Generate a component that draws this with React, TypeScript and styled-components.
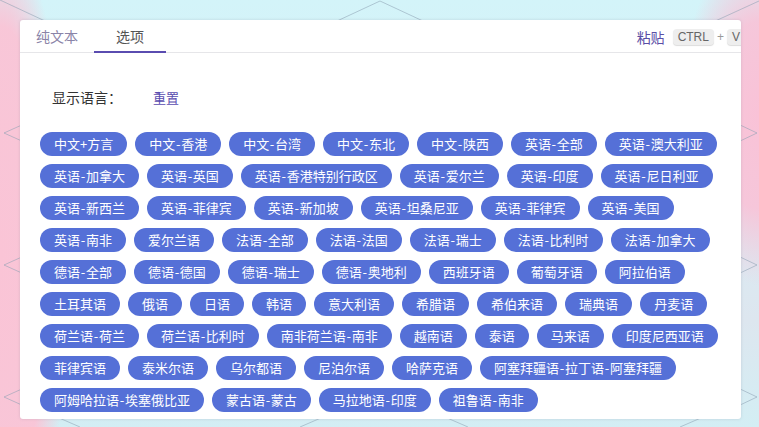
import React from "react";
import styled, { createGlobalStyle } from "styled-components";

const GlobalStyle = createGlobalStyle`
  html, body {
    margin: 0;
    padding: 0;
    width: 759px;
    height: 427px;
    overflow: hidden;
  }
  body {
    font-family: "Noto Sans CJK SC", "Noto Sans", sans-serif;
  }
  * { box-sizing: border-box; }
`;

const Page = styled.div`
  position: relative;
  width: 759px;
  height: 427px;
  padding: 20px 18px 8px 20px;
  background:
    radial-gradient(ellipse 70px 320px at 0% 60%, rgba(250, 196, 214, 1) 0%, rgba(250, 196, 214, 0.95) 72%, rgba(250, 196, 214, 0) 100%),
    radial-gradient(ellipse 80px 170px at 100% 27%, rgba(249, 194, 215, 1) 0%, rgba(249, 194, 215, 0.9) 55%, rgba(249, 194, 215, 0) 100%),
    linear-gradient(to bottom, #d3f4f9 0%, #d8eef5 40%, #dde6ef 75%, #d3eef4 100%);
`;

const Backdrop = styled.svg`
  position: absolute;
  inset: 0;
  width: 759px;
  height: 427px;
  z-index: 0;
`;

const Card = styled.div`
  position: relative;
  z-index: 1;
  width: 721px;
  height: 399px;
  background: #ffffff;
  border-radius: 3px;
  box-shadow: 0 0 3px rgba(120, 120, 140, 0.25);
  overflow: hidden;
  display: flex;
  flex-direction: column;
`;

const Header = styled.div`
  height: 33px;
  flex: none;
  border-bottom: 1px solid #e6e6e9;
  display: flex;
  align-items: stretch;
  justify-content: space-between;
`;

const Tabs = styled.div`
  display: flex;
  align-items: stretch;
`;

const Tab = styled.div<{ $active?: boolean }>`
  position: relative;
  min-width: 72px;
  padding: 0 16px;
  display: flex;
  align-items: center;
  justify-content: center;
  font-size: 14px;
  color: ${(p) => (p.$active ? "#555555" : "#8a84a8")};
  &::after {
    content: "";
    display: ${(p) => (p.$active ? "block" : "none")};
    position: absolute;
    left: 0;
    right: 0;
    bottom: -1px;
    height: 2px;
    background: #5a4cb0;
  }
`;

const PasteGroup = styled.div`
  display: flex;
  align-items: center;
  gap: 8px;
  margin-right: -4px;
  padding-top: 2px;
`;

const PasteLabel = styled.span`
  font-size: 14px;
  color: #5a4ea6;
`;

const Key = styled.span`
  display: inline-flex;
  align-items: center;
  justify-content: center;
  height: 16px;
  padding: 0 5px;
  border-radius: 4px;
  background: #eeeeee;
  box-shadow: 0 1px 1px rgba(0, 0, 0, 0.14);
  font-family: "Liberation Sans", Arial, sans-serif;
  font-size: 12px;
  color: #666666;
`;

const Plus = styled.span`
  margin: 0 -5px;
  font-family: "Liberation Sans", Arial, sans-serif;
  font-size: 12px;
  color: #999999;
`;

const Body = styled.div`
  padding: 34px 8px 0 20px;
  display: flex;
  flex-direction: column;
`;

const LabelRow = styled.div`
  height: 20px;
  padding-left: 12px;
  margin-bottom: 25px;
  display: flex;
  align-items: center;
`;

const Label = styled.span`
  width: 101px;
  font-size: 14px;
  color: #333333;
`;

const ResetLink = styled.span`
  font-size: 13px;
  color: #5a4cb0;
`;

const PillList = styled.div`
  display: flex;
  flex-wrap: wrap;
  gap: 8px;
`;

const Pill = styled.span`
  height: 24px;
  padding: 0 14px;
  border-radius: 12px;
  background: #5570d7;
  color: #ffffff;
  font-size: 13px;
  line-height: 24px;
  white-space: nowrap;
`;

const Dash = styled.span`
  margin: 0 0.7px;
`;

const languages = [
  "中文+方言", "中文-香港", "中文-台湾", "中文-东北", "中文-陕西", "英语-全部", "英语-澳大利亚",
  "英语-加拿大", "英语-英国", "英语-香港特别行政区", "英语-爱尔兰", "英语-印度", "英语-尼日利亚",
  "英语-新西兰", "英语-菲律宾", "英语-新加坡", "英语-坦桑尼亚", "英语-菲律宾", "英语-美国",
  "英语-南非", "爱尔兰语", "法语-全部", "法语-法国", "法语-瑞士", "法语-比利时", "法语-加拿大",
  "德语-全部", "德语-德国", "德语-瑞士", "德语-奥地利", "西班牙语", "葡萄牙语", "阿拉伯语",
  "土耳其语", "俄语", "日语", "韩语", "意大利语", "希腊语", "希伯来语", "瑞典语", "丹麦语",
  "荷兰语-荷兰", "荷兰语-比利时", "南非荷兰语-南非", "越南语", "泰语", "马来语", "印度尼西亚语",
  "菲律宾语", "泰米尔语", "乌尔都语", "尼泊尔语", "哈萨克语", "阿塞拜疆语-拉丁语-阿塞拜疆",
  "阿姆哈拉语-埃塞俄比亚", "蒙古语-蒙古", "马拉地语-印度", "祖鲁语-南非",
];

const renderLabel = (label: string) => {
  const parts = label.split("-");
  return parts.map((part, i) => (
    <React.Fragment key={i}>
      {i > 0 && <Dash>-</Dash>}
      {part}
    </React.Fragment>
  ));
};

const lineColor = "rgba(140, 160, 178, 0.55)";

export default function App() {
  return (
    <>
      <GlobalStyle />
      <Page>
        <Backdrop viewBox="0 0 759 427">
          <g fill="none" stroke={lineColor} strokeWidth="1">
            <polyline points="0,0 60,28" />
            <polyline points="322,28 380,1 438,28" />
            <polyline points="700,28 759,1" />
            <polyline points="24,124 4,133 24,142" />
            <polyline points="24,256 4,265 24,274" />
            <polyline points="24,388 4,397 24,406" />
            <polyline points="738,124 757,133 738,142" />
            <polyline points="738,256 757,265 738,274" />
            <polyline points="738,388 757,397 738,406" />
            <polyline points="50,414 80,427" />
            <polyline points="300,427 330,414" />
            <polyline points="438,414 468,427" />
            <polyline points="680,427 710,414" />
          </g>
        </Backdrop>
        <Card>
          <Header>
            <Tabs>
              <Tab>纯文本</Tab>
              <Tab $active>选项</Tab>
            </Tabs>
            <PasteGroup>
              <PasteLabel>粘贴</PasteLabel>
              <Key>CTRL</Key>
              <Plus>+</Plus>
              <Key>V</Key>
            </PasteGroup>
          </Header>
          <Body>
            <LabelRow>
              <Label>显示语言：</Label>
              <ResetLink>重置</ResetLink>
            </LabelRow>
            <PillList>
              {languages.map((l, i) => (
                <Pill key={i}>{renderLabel(l)}</Pill>
              ))}
            </PillList>
          </Body>
        </Card>
      </Page>
    </>
  );
}
